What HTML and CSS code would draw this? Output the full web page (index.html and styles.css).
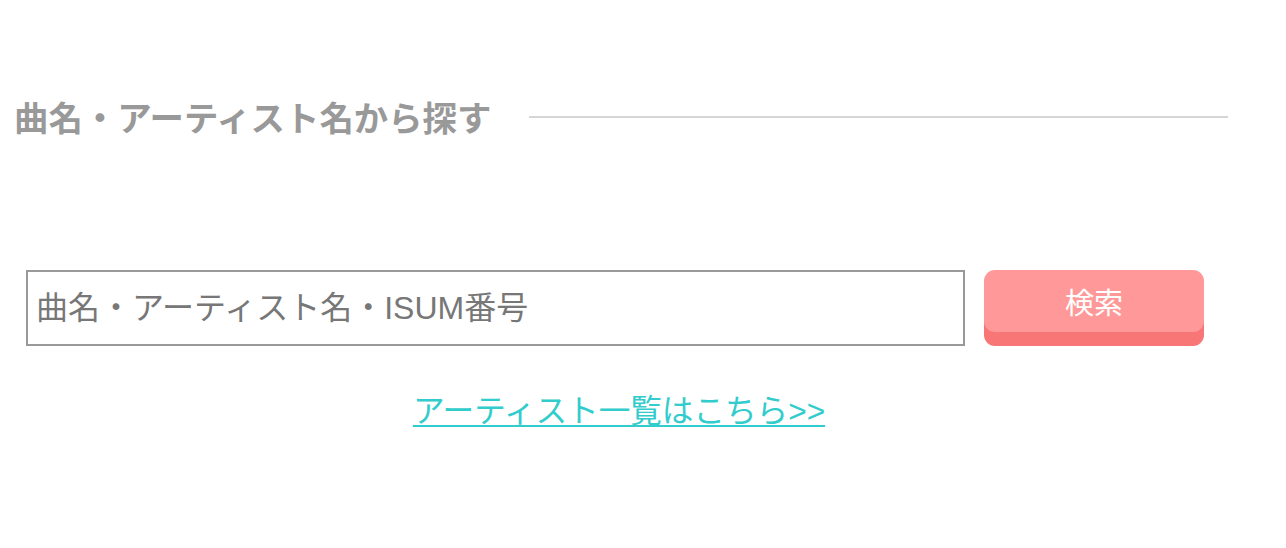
FILE: index.html
```html
<!DOCTYPE html>
<html lang="ja">
<head>
  <meta charset="UTF-8" />
  <title>曲名・アーティスト名から探す</title>
  <link rel="stylesheet" href="styles.css">
</head>
<body>
  <div class="section">
    <div class="section-head">
      <h2>曲名・アーティスト名から探す</h2>
      <span class="rule"></span>
    </div>

    <form class="search" id="searchForm">
      <div class="search-row">
        <input type="text" class="search-input" placeholder="曲名・アーティスト名・ISUM番号" />
        <button type="submit" class="search-btn">検索</button>
      </div>
      <p class="artist-link"><a href="#">アーティスト一覧はこちら&gt;&gt;</a></p>
    </form>
  </div>
</body>
</html>
```

FILE: styles.css
```css
* {
  box-sizing: border-box;
  margin: 0;
  padding: 0;
}

body {
  background: #fff;
  font-family: "Liberation Sans", "Noto Sans CJK JP", sans-serif;
}

.section {
  padding-top: 91px;
}

.section-head {
  display: flex;
  align-items: center;
  padding-left: 14px;
  padding-right: 58px;
}

.section-head h2 {
  font-family: "Noto Sans CJK JP", sans-serif;
  font-size: 34.4px;
  font-weight: bold;
  line-height: 50px;
  color: #999;
}

.rule {
  flex: 1;
  height: 2px;
  margin-left: 38px;
  margin-top: 2px;
  background: #d6d6d6;
}

.search {
  width: 1238px;
  margin-top: 129px;
}

.search-row {
  display: flex;
  align-items: flex-start;
  gap: 19px;
  padding-left: 26px;
}

.search-input {
  width: 939px;
  height: 76px;
  border: 2px solid #999;
  padding: 0 8px;
  font-family: "Liberation Sans", "Noto Sans CJK JP", sans-serif;
  font-size: 32px;
  color: #555;
  outline: none;
}

.search-input::placeholder {
  color: #777;
}

.search-btn {
  width: 220px;
  height: 62px;
  border: none;
  border-radius: 11px;
  background: #ff9999;
  box-shadow: 0 14px 0 #f87676;
  color: #fff;
  font-family: "Noto Sans CJK JP", sans-serif;
  font-size: 29px;
  font-weight: normal;
  padding: 0;
  cursor: pointer;
}

.artist-link {
  margin-top: 43px;
  text-align: center;
  font-size: 31.6px;
  line-height: 45px;
}

.artist-link a {
  color: #33cccc;
  text-decoration-thickness: 2px;
  text-underline-offset: 3px;
}
```
